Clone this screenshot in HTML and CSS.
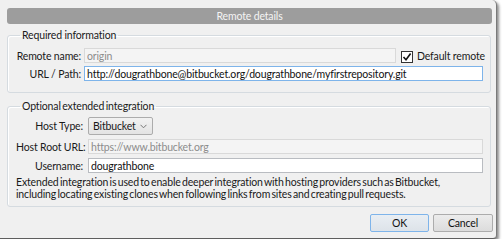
FILE: index.html
```html
<!DOCTYPE html>
<html>
<head>
    <meta charset="UTF-8">
    <title>Remote details</title>
    <link rel="stylesheet" href="styles.css">
</head>
<body>
<div class="dialog">
    <div class="titlebar">Remote details</div>

    <fieldset class="group group-required">
        <legend>Required information</legend>
        <div class="form-grid">
            <label class="field-label">Remote name:</label>
            <div class="field-row">
                <input type="text" class="text-input is-disabled" value="origin" disabled/>
                <label class="check">
                    <span class="check-box">
                        <svg width="10" height="10" viewBox="0 0 10 10"><path d="M1.5 5 L4 7.8 L8.6 1.6" fill="none" stroke="#111" stroke-width="1.6"/></svg>
                    </span>
                    Default remote
                </label>
            </div>
            <label class="field-label">URL / Path:</label>
            <input type="text" class="text-input is-focused" value="http://dougrathbone@bitbucket.org/dougrathbone/myfirstrepository.git"/>
        </div>
    </fieldset>

    <fieldset class="group group-optional">
        <legend>Optional extended integration</legend>
        <div class="form-grid">
            <label class="field-label">Host Type:</label>
            <div class="field-row">
                <div class="combo">
                    <span>Bitbucket</span>
                    <svg width="7" height="5" viewBox="0 0 7 5"><path d="M0.5 0.8 L3.5 3.8 L6.5 0.8" fill="none" stroke="#777" stroke-width="1"/></svg>
                </div>
            </div>
            <label class="field-label">Host Root URL:</label>
            <input type="text" class="text-input is-disabled" value="https://www.bitbucket.org" disabled/>
            <label class="field-label">Username:</label>
            <input type="text" class="text-input" value="dougrathbone"/>
        </div>
        <p class="note">Extended integration is used to enable deeper integration with hosting providers such as Bitbucket,<br/>including locating existing clones when following links from sites and creating pull requests.</p>
    </fieldset>

    <div class="buttons">
        <button class="btn btn-default">OK</button>
        <button class="btn">Cancel</button>
    </div>
</div>
</body>
</html>
```

FILE: styles.css
```css
* {
    margin: 0;
    padding: 0;
    box-sizing: border-box;
}

html, body {
    background: #fff;
    font-family: Lato, "Open Sans", sans-serif;
    font-size: 10.5px;
    letter-spacing: -0.15px;
    color: #1a1a1a;
}

.dialog {
    width: 497px;
    height: 239px;
    padding: 8px 0 0 7px;
    background: #f0f0f0;
    border-right: 1px solid #7a7a7a;
    border-bottom: 1px solid #5e5e5e;
    border-top-right-radius: 5px;
    border-bottom-right-radius: 4px;
    box-shadow: 2px 2px 3px rgba(0, 0, 0, .45);
}

.titlebar {
    height: 16px;
    margin-right: 4px;
    line-height: 16px;
    text-align: center;
    color: #f4f4f4;
    background: #9d9d9d;
    border-radius: 3px;
}

.group {
    min-width: 0;
    margin-right: 5px;
    padding: 0 7px 0 8px;
    border: 1px solid #d5dbe0;
    border-radius: 3px;
    box-shadow: inset 1px 1px 0 #fff;
}

.group legend {
    margin-left: 4px;
    padding: 0 2px;
    line-height: 14px;
}

.group-required {
    margin-top: 4px;
    padding-top: 6px;
    padding-bottom: 11px;
}

.group-optional {
    margin-top: 6px;
    padding-top: 4px;
    padding-bottom: 6px;
}

.group-optional legend {
    word-spacing: -1px;
}

.form-grid {
    display: grid;
    align-items: center;
}

.group-required .form-grid {
    grid-template-columns: 65px minmax(0, 1fr);
    column-gap: 3px;
    row-gap: 3px;
}

.group-optional .form-grid {
    grid-template-columns: 67px minmax(0, 1fr);
    column-gap: 5px;
    row-gap: 4px;
}

.field-label {
    text-align: right;
    white-space: nowrap;
}

.field-row {
    display: flex;
    align-items: center;
    min-width: 0;
}

.text-input {
    display: block;
    width: 100%;
    min-width: 0;
    height: 15px;
    padding: 0 2px;
    font: inherit;
    letter-spacing: inherit;
    color: #111;
    background: #fff;
    border: 1px solid #b9bcc1;
    outline: none;
}

.text-input.is-disabled {
    color: #8c8c8c;
    background: #f4f4f4;
    border-color: #d9d9d9;
}

.text-input.is-focused {
    border-color: #7eb4ea;
}

.group-required .field-row .text-input {
    width: 312px;
    flex: none;
}

.check {
    display: flex;
    align-items: center;
    margin-left: 5px;
    white-space: nowrap;
}

.check-box {
    display: flex;
    align-items: center;
    justify-content: center;
    width: 12px;
    height: 12px;
    margin: 2px 4px 0 0;
    background: #fff;
    border: 1px solid #333;
}

.combo {
    display: flex;
    align-items: center;
    justify-content: space-between;
    width: 65px;
    height: 18px;
    padding: 0 5px 0 4px;
    background: linear-gradient(#f2f2f2, #e3e3e3);
    border: 1px solid #acacac;
    border-radius: 2px;
}

.note {
    margin-top: 3px;
    line-height: 12px;
    white-space: nowrap;
    word-spacing: -1.2px;
}

.buttons {
    display: flex;
    justify-content: flex-end;
    gap: 4px;
    margin: 7px 3px 0 0;
}

.btn {
    width: 60px;
    height: 18px;
    font: inherit;
    letter-spacing: inherit;
    color: #111;
    background: linear-gradient(#ececec, #dcdcdc);
    border: 1px solid #acacac;
    border-radius: 2px;
}

.btn-default {
    width: 59px;
    border-color: #7eb4ea;
    background: linear-gradient(#e9eef3, #dde3e9);
}
```
